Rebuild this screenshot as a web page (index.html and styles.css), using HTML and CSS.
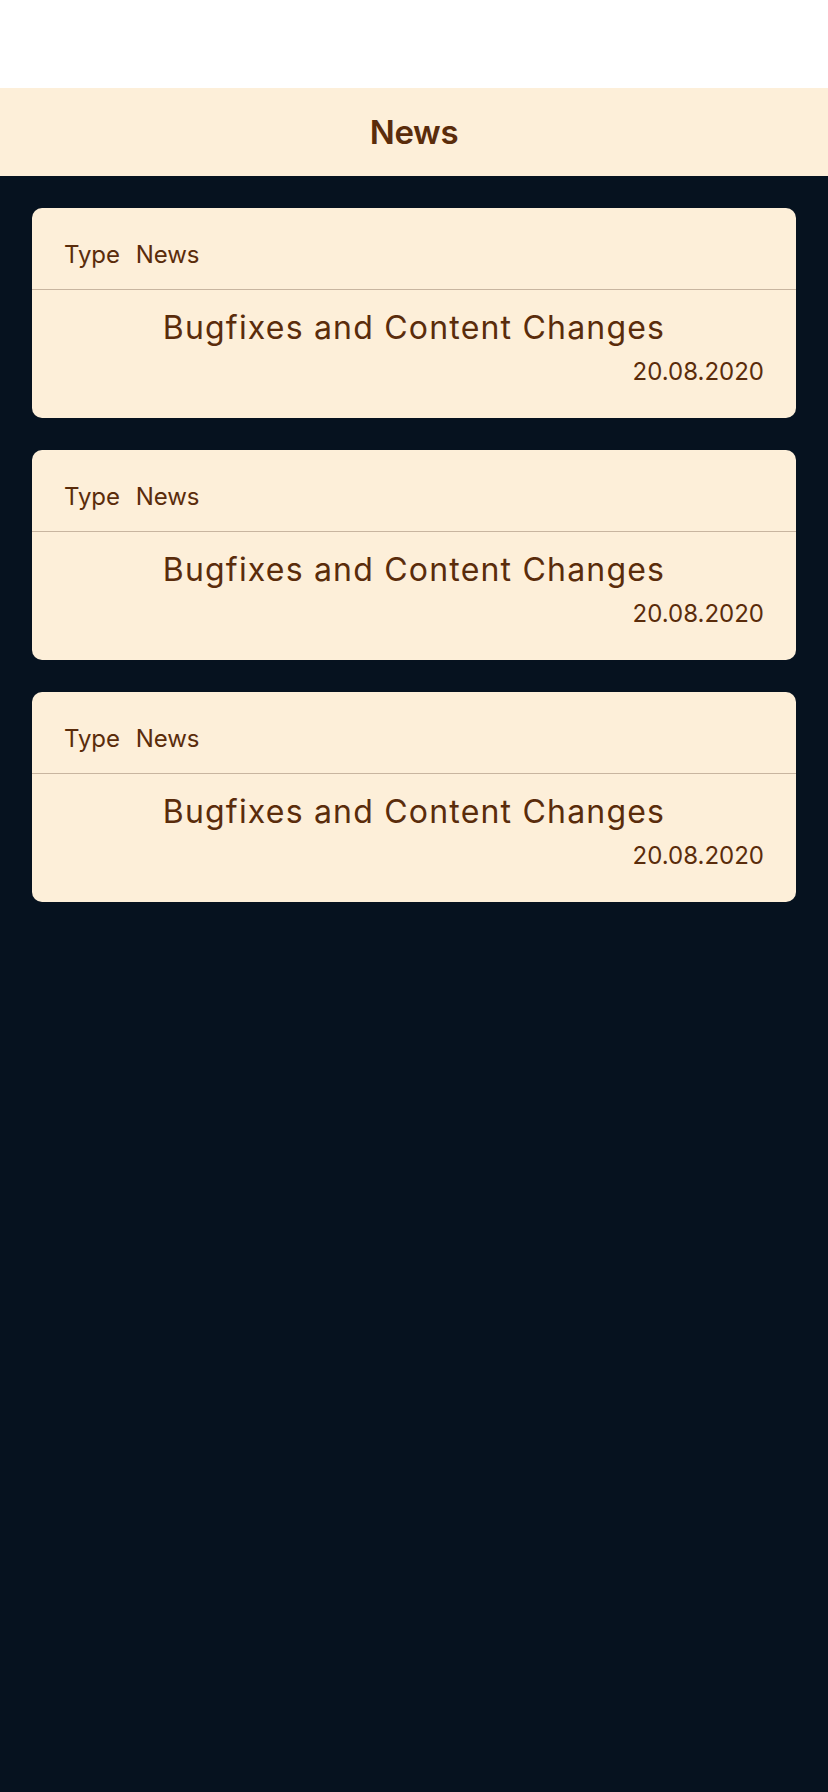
FILE: index.html
```html
<!DOCTYPE html>
<html lang="en">
<head>
<meta charset="utf-8">
<title>News</title>
<link rel="stylesheet" href="styles.css">
</head>
<body>
<div class="status"></div>
<header class="navbar"><h1 class="nav-title">News</h1></header>
<main class="list">
  <article class="card">
    <div class="card-head"><span class="label">Type</span><span class="value">News</span></div>
    <div class="card-body">
      <h2 class="title">Bugfixes and Content Changes</h2>
      <div class="date">20.08.2020</div>
    </div>
  </article>
  <article class="card">
    <div class="card-head"><span class="label">Type</span><span class="value">News</span></div>
    <div class="card-body">
      <h2 class="title">Bugfixes and Content Changes</h2>
      <div class="date">20.08.2020</div>
    </div>
  </article>
  <article class="card">
    <div class="card-head"><span class="label">Type</span><span class="value">News</span></div>
    <div class="card-body">
      <h2 class="title">Bugfixes and Content Changes</h2>
      <div class="date">20.08.2020</div>
    </div>
  </article>
</main>
</body>
</html>
```
FILE: styles.css
```css
* { box-sizing: border-box; }
html, body { margin: 0; padding: 0; }
body {
  background: #06121f;
  min-height: 1792px;
  font-family: Inter, "Noto Sans", "Liberation Sans", sans-serif;
  color: #5a2c0b;
}
.status { height: 88px; background: #ffffff; }
.navbar {
  height: 88px;
  background: #fdefd9;
  display: flex;
  align-items: center;
  justify-content: center;
}
.nav-title {
  margin: 0;
  font-size: 33px;
  font-weight: 600;
  line-height: 40px;
  letter-spacing: -0.3px;
}
.list {
  padding: 32px;
  display: flex;
  flex-direction: column;
  gap: 32px;
}
.card {
  background: #fdefd9;
  border-radius: 10px;
  overflow: hidden;
}
.card-head {
  padding: 33px 32px 0;
  height: 82px;
  display: flex;
  gap: 16px;
  font-size: 24px;
  line-height: 28px;
  letter-spacing: -0.1px;
  border-bottom: 1px solid #c8b5a0;
}
.card-body {
  height: 128px;
  padding: 19px 32px 0;
}
.title {
  margin: 0;
  font-size: 32px;
  font-weight: 400;
  line-height: 38px;
  letter-spacing: 1.2px;
  text-align: center;
}
.date {
  margin-top: 11px;
  font-size: 24px;
  line-height: 28px;
  text-align: right;
}
```
